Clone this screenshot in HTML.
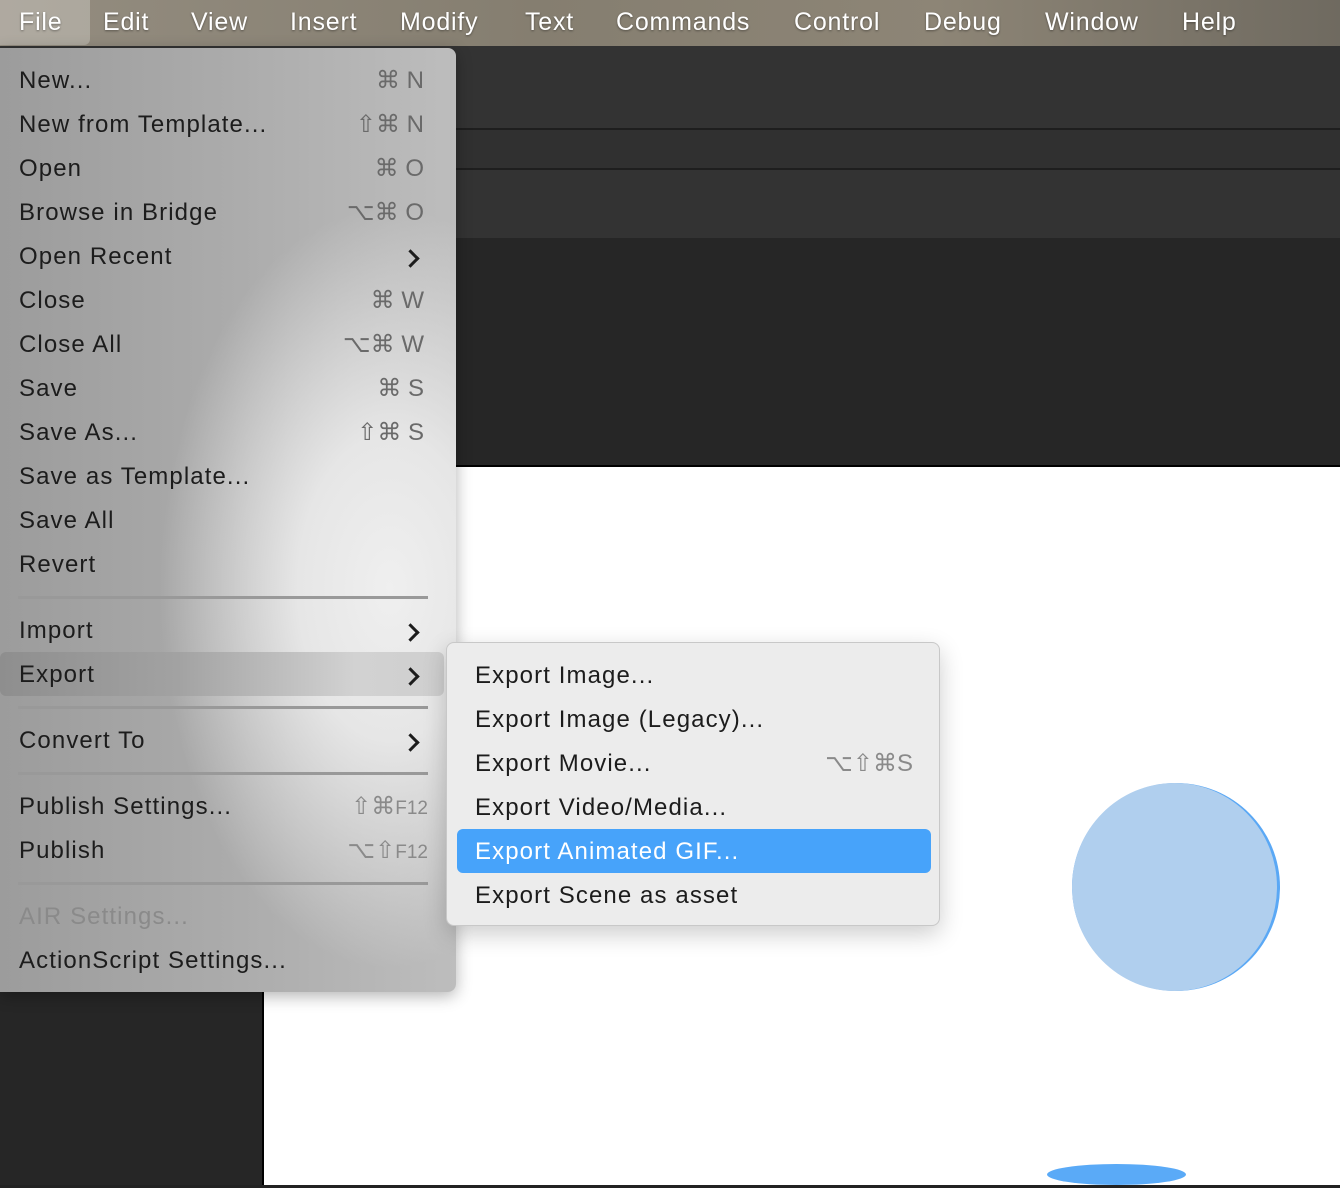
<!DOCTYPE html>
<html><head><meta charset="utf-8"><style>
body{margin:0;width:1340px;height:1188px;position:relative;overflow:hidden;background:#262626;font-family:"Liberation Sans","DejaVu Sans",sans-serif;}
.bar{position:absolute;left:0;top:0;width:1340px;height:46px;background:linear-gradient(90deg,#948d80,#857e70 40%,#8d8576 70%,#6f6a60);}
.bar span{position:absolute;top:8px;font-size:25px;color:#fff;letter-spacing:0.8px;text-shadow:0 1px 2px rgba(0,0,0,.4)}
.filehl{position:absolute;left:0;top:0;width:90px;height:45px;background:rgba(255,255,255,.25);border-radius:0 0 6px 0}
.abs{position:absolute}
.menu{position:absolute;left:0;top:48px;width:456px;height:944px;border-radius:0 8px 8px 0;
background:radial-gradient(ellipse 230px 380px at 390px 540px,#efefef 0%,#e6e6e6 40%,rgba(200,200,200,0) 100%),linear-gradient(90deg,#9c9c9c,#ababab 50%,#bdbdbd);box-shadow:0 4px 16px rgba(0,0,0,.3)}
.it{position:absolute;left:19px;font-size:24px;letter-spacing:1.1px;color:#1c1c1c;line-height:30px}
.sc{position:absolute;right:32px;font-size:24px;color:#6a6a6a;line-height:30px;text-align:right}
.sep{position:absolute;left:18px;width:410px;height:3px;background:#999}
.chev{position:absolute;left:404px;width:10px;height:10px;border-right:3px solid #1c1c1c;border-top:3px solid #1c1c1c;transform:rotate(45deg)}
.sub{position:absolute;left:446px;top:642px;width:494px;height:284px;background:#ececec;border-radius:8px;border:1px solid #c8c8c8;box-sizing:border-box;box-shadow:0 8px 24px rgba(0,0,0,.2)}
.sub .it{left:28px}
</style></head><body>
<div class="bar"><div class="filehl"></div>
<span style="left:19px">File</span><span style="left:103px">Edit</span><span style="left:191px">View</span><span style="left:290px">Insert</span><span style="left:400px">Modify</span><span style="left:525px">Text</span><span style="left:616px">Commands</span><span style="left:794px">Control</span><span style="left:924px">Debug</span><span style="left:1045px">Window</span><span style="left:1182px">Help</span></div>
<div class="abs" style="left:0;top:46px;width:1340px;height:82px;background:#333"></div>
<div class="abs" style="left:0;top:128px;width:1340px;height:2px;background:#1e1e1e"></div>
<div class="abs" style="left:0;top:130px;width:1340px;height:38px;background:#303030"></div>
<div class="abs" style="left:0;top:168px;width:1340px;height:2px;background:#1e1e1e"></div>
<div class="abs" style="left:0;top:170px;width:1340px;height:68px;background:#333"></div>
<div class="abs" style="left:262px;top:465px;width:1078px;height:2px;background:#000"></div>
<div class="abs" style="left:262px;top:467px;width:1078px;height:718px;background:#fff;border-left:2px solid #000"></div>
<div class="abs" style="left:1072px;top:783px;width:208px;height:208px;border-radius:50%;background:#5aa8f5"></div>
<div class="abs" style="left:1072px;top:783px;width:205px;height:208px;border-radius:50%;background:#b0cfee"></div>
<div class="abs" style="left:1047px;top:1164px;width:139px;height:21px;border-radius:50%;background:#5aaaf7"></div>
<div class="abs" style="left:0;top:1185px;width:1340px;height:3px;background:#222"></div>

<div class="menu">
<div class="abs" style="left:0;top:604px;width:444px;height:44px;border-radius:6px;background:linear-gradient(90deg,#8e8e8e,#a2a2a2 40%,#d2d2d2 80%,#cfcfcf)"></div>
<div class="it" style="top:18px">New...</div><div class="sc" style="top:18px">⌘ N</div>
<div class="it" style="top:62px">New from Template...</div><div class="sc" style="top:62px">⇧⌘ N</div>
<div class="it" style="top:106px">Open</div><div class="sc" style="top:106px">⌘ O</div>
<div class="it" style="top:150px">Browse in Bridge</div><div class="sc" style="top:150px">⌥⌘ O</div>
<div class="it" style="top:194px">Open Recent</div><div class="chev" style="top:204px"></div>
<div class="it" style="top:238px">Close</div><div class="sc" style="top:238px">⌘ W</div>
<div class="it" style="top:282px">Close All</div><div class="sc" style="top:282px">⌥⌘ W</div>
<div class="it" style="top:326px">Save</div><div class="sc" style="top:326px">⌘ S</div>
<div class="it" style="top:370px">Save As...</div><div class="sc" style="top:370px">⇧⌘ S</div>
<div class="it" style="top:414px">Save as Template...</div>
<div class="it" style="top:458px">Save All</div>
<div class="it" style="top:502px">Revert</div>
<div class="sep" style="top:548px"></div>
<div class="it" style="top:568px">Import</div><div class="chev" style="top:578px"></div>
<div class="it" style="top:612px">Export</div><div class="chev" style="top:622px"></div>
<div class="sep" style="top:658px"></div>
<div class="it" style="top:678px">Convert To</div><div class="chev" style="top:688px"></div>
<div class="sep" style="top:724px"></div>
<div class="it" style="top:744px">Publish Settings...</div><div class="sc" style="top:744px;right:28px;color:#8a8a8a">⇧⌘<span style="font-size:19px">F12</span></div>
<div class="it" style="top:788px">Publish</div><div class="sc" style="top:788px;right:28px;color:#8a8a8a">⌥⇧<span style="font-size:19px">F12</span></div>
<div class="sep" style="top:834px"></div>
<div class="it" style="top:854px;color:#8a8a8a">AIR Settings...</div>
<div class="it" style="top:898px">ActionScript Settings...</div>
</div>

<div class="sub">
<div class="abs" style="left:10px;top:186px;width:474px;height:44px;border-radius:6px;background:#47a3fa"></div>
<div class="it" style="top:18px">Export Image...</div>
<div class="it" style="top:62px">Export Image (Legacy)...</div>
<div class="it" style="top:106px">Export Movie...</div><div class="sc" style="top:106px;right:26px;color:#8a8a8a">⌥⇧⌘S</div>
<div class="it" style="top:150px">Export Video/Media...</div>
<div class="it" style="top:194px;color:#fff">Export Animated GIF...</div>
<div class="it" style="top:238px">Export Scene as asset</div>
</div>
</body></html>
